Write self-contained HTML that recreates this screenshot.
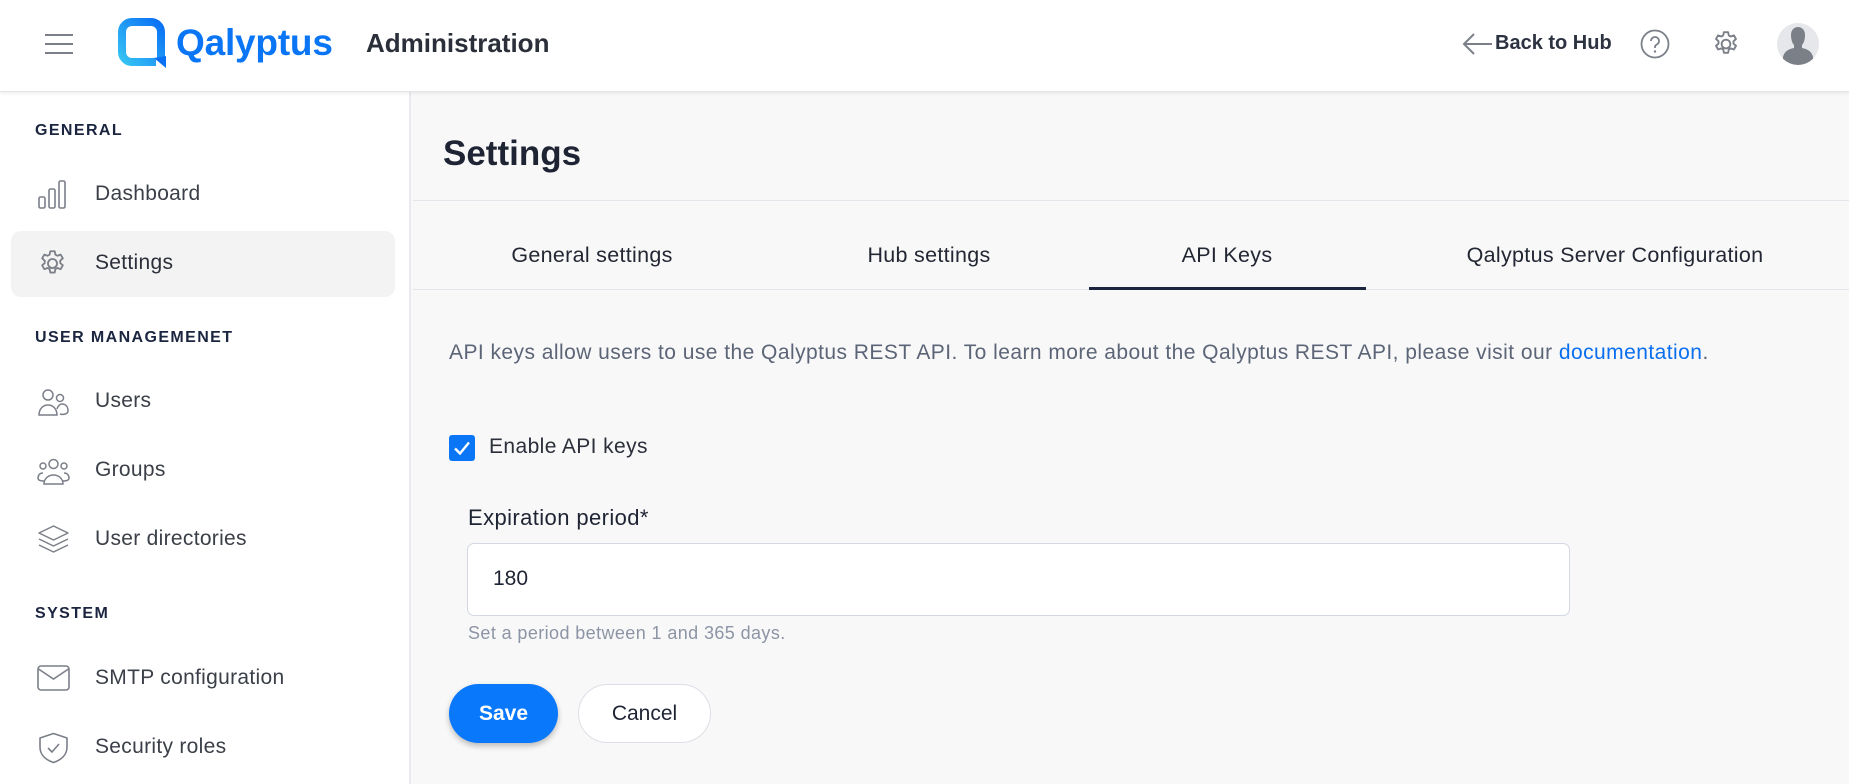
<!DOCTYPE html>
<html><head><meta charset="utf-8"><style>
*{margin:0;padding:0;box-sizing:border-box}
body{width:1849px;height:784px;overflow:hidden;background:#f8f8f8;font-family:"Liberation Sans",sans-serif;position:relative}
.a{position:absolute;white-space:nowrap}
#hdr{position:absolute;left:0;top:0;width:1849px;height:92px;background:#fff;border-bottom:1px solid #e3e5ea;box-shadow:0 2px 3px rgba(0,0,0,.06);z-index:2}
#side{position:absolute;left:0;top:92px;width:411px;height:692px;background:#fff;border-right:2px solid #e8eaef}
.sec{font-size:16px;font-weight:bold;letter-spacing:1.4px;color:#1b2540}
.it{font-size:21px;color:#3b3f48;letter-spacing:0.3px}
.ic{position:absolute}
.tab{font-size:21.5px;color:#222733;letter-spacing:0.3px;text-align:center}
</style></head><body>
<div id="hdr">
  <div class="a" style="left:45px;top:34px;width:28px">
    <div style="height:2px;background:#7a7f88;margin-bottom:7px"></div>
    <div style="height:2px;background:#7a7f88;margin-bottom:7px"></div>
    <div style="height:2px;background:#7a7f88"></div>
  </div>
  <svg class="a" style="left:118px;top:18px" width="50" height="52" viewBox="0 0 50 52">
    <defs><linearGradient id="g" x1="0" y1="1" x2="1" y2="0"><stop offset="0" stop-color="#35c3f3"/><stop offset="1" stop-color="#0a70f5"/></linearGradient></defs>
    <path d="M38 44 H14 A10 10 0 0 1 4 34 V14 A10 10 0 0 1 14 4 H33 A10 10 0 0 1 43 14 V40" fill="none" stroke="url(#g)" stroke-width="8" stroke-linejoin="round"/>
    <path d="M36 40 L48 50 L48 38 Z" fill="#0a70f5"/>
  </svg>
  <div class="a" style="left:176px;top:22px;font-size:37px;font-weight:bold;color:#0a76f6;letter-spacing:-0.2px">Qalyptus</div>
  <div class="a" style="left:366px;top:28px;font-size:26px;font-weight:bold;color:#2b2f3a">Administration</div>
  <svg class="a" style="left:1462px;top:32px" width="32" height="24" viewBox="0 0 32 24"><path d="M30 12H2M12 2L2 12l10 10" fill="none" stroke="#7b7f88" stroke-width="2"/></svg>
  <div class="a" style="left:1495px;top:32px;font-size:20px;font-weight:bold;color:#2d3240">Back to Hub</div>
  <svg class="a" style="left:1640px;top:29px" width="30" height="30" viewBox="0 0 30 30"><circle cx="15" cy="15" r="13.5" fill="none" stroke="#7b7f88" stroke-width="1.8"/><path d="M11 12a4 4 0 1 1 5.5 3.7c-1 .5-1.5 1.2-1.5 2.3v1" fill="none" stroke="#7b7f88" stroke-width="1.8"/><circle cx="15" cy="22.5" r="1.2" fill="#7b7f88"/></svg>
  <svg class="a" style="left:1711px;top:29px" width="30" height="30" viewBox="0 0 24 24"><path d="M12 8.5a3.5 3.5 0 1 0 0 7 3.5 3.5 0 0 0 0-7z" fill="none" stroke="#7b7f88" stroke-width="1.5"/><path d="M10.3 2.5h3.4l.5 2.6 1.6.9 2.5-.9 1.7 2.9-2 1.8v1.9l2 1.7-1.7 3-2.5-.9-1.6.9-.5 2.6h-3.4l-.5-2.6-1.6-.9-2.5.9-1.7-3 2-1.7v-1.9l-2-1.8 1.7-2.9 2.5.9 1.6-.9z" fill="none" stroke="#7b7f88" stroke-width="1.5" stroke-linejoin="round"/></svg>
  <div class="a" style="left:1777px;top:23px;width:42px;height:42px;border-radius:50%;background:#e6e7ea;overflow:hidden">
    <svg width="42" height="42" viewBox="0 0 42 42"><path d="M14 12c0-6 4-8 7-8s7 2 7 8c0 4-1 8-3 10v3c6 1 10 4 11 9v10H6V34c1-5 5-8 11-9v-3c-2-2-3-6-3-10z" fill="#7b8088"/></svg>
  </div>
</div>
<div id="side">
  <div class="a sec" style="left:35px;top:30px">GENERAL</div>
  <svg class="ic" style="left:38px;top:88px" width="30" height="30" viewBox="0 0 30 30"><g fill="none" stroke="#7b7f88" stroke-width="1.6"><rect x="1" y="17" width="6" height="11" rx="1.5"/><rect x="11" y="9" width="6" height="19" rx="1.5"/><rect x="21" y="1" width="6" height="27" rx="1.5"/></g></svg>
  <div class="a it" style="left:95px;top:90px">Dashboard</div>
  <div class="a" style="left:11px;top:139px;width:384px;height:66px;background:#f3f3f3;border-radius:10px"></div>
  <svg class="ic" style="left:37px;top:156px" width="31" height="31" viewBox="0 0 24 24"><path d="M12 8.5a3.5 3.5 0 1 0 0 7 3.5 3.5 0 0 0 0-7z" fill="none" stroke="#7b7f88" stroke-width="1.4"/><path d="M10.3 2.5h3.4l.5 2.6 1.6.9 2.5-.9 1.7 2.9-2 1.8v1.9l2 1.7-1.7 3-2.5-.9-1.6.9-.5 2.6h-3.4l-.5-2.6-1.6-.9-2.5.9-1.7-3 2-1.7v-1.9l-2-1.8 1.7-2.9 2.5.9 1.6-.9z" fill="none" stroke="#7b7f88" stroke-width="1.4" stroke-linejoin="round"/></svg>
  <div class="a it" style="left:95px;top:159px;color:#2b2f3a">Settings</div>
  <div class="a sec" style="left:35px;top:237px">USER MANAGEMENET</div>
  <svg class="ic" style="left:37px;top:296px" width="33" height="30" viewBox="0 0 33 30"><g fill="none" stroke="#7b7f88" stroke-width="1.5"><circle cx="11" cy="7" r="5"/><circle cx="23" cy="10" r="3.5"/><path d="M2 27c0-6 4-10 9-10s9 4 9 10z"/><path d="M20 21c1-3 2.5-5 5-5 4 0 6 3 6 7 0 3-5 4-8 3"/></g></svg>
  <div class="a it" style="left:95px;top:297px">Users</div>
  <svg class="ic" style="left:37px;top:365px" width="33" height="30" viewBox="0 0 33 30"><g fill="none" stroke="#7b7f88" stroke-width="1.5"><circle cx="16.5" cy="7" r="4.5"/><circle cx="6" cy="9" r="3"/><circle cx="27" cy="9" r="3"/><path d="M7 27c0-5 4-9 9.5-9s9.5 4 9.5 9z"/><path d="M7 24c-4 0-6-1-6-3 0-3 2-5 5-5M26 24c4 0 6-1 6-3 0-3-2-5-5-5"/></g></svg>
  <div class="a it" style="left:95px;top:366px">Groups</div>
  <svg class="ic" style="left:37px;top:432px" width="33" height="32" viewBox="0 0 33 32"><g fill="none" stroke="#7b7f88" stroke-width="1.5" stroke-linejoin="round"><path d="M16.5 2L31 9l-14.5 7L2 9z"/><path d="M2 15l14.5 7L31 15"/><path d="M2 21l14.5 7L31 21"/></g></svg>
  <div class="a it" style="left:95px;top:435px">User directories</div>
  <div class="a sec" style="left:35px;top:513px">SYSTEM</div>
  <svg class="ic" style="left:37px;top:573px" width="33" height="26" viewBox="0 0 33 26"><g fill="none" stroke="#7b7f88" stroke-width="1.6"><rect x="1" y="1" width="31" height="24" rx="3"/><path d="M1.5 4l15 10 15-10"/></g></svg>
  <div class="a it" style="left:95px;top:574px">SMTP configuration</div>
  <svg class="ic" style="left:38px;top:640px" width="31" height="32" viewBox="0 0 31 32"><g fill="none" stroke="#7b7f88" stroke-width="1.6" stroke-linejoin="round"><path d="M15.5 1.5L29 6v9c0 8-6 13-13.5 15.5C8 28 2 23 2 15V6z"/><path d="M10 16l4 4 7-8"/></g></svg>
  <div class="a it" style="left:95px;top:643px">Security roles</div>
</div>
<div class="a" style="left:443px;top:134px;font-size:35px;font-weight:bold;color:#1e2433">Settings</div>
<div class="a" style="left:413px;top:200px;width:1436px;height:1px;background:#e3e5ea"></div>
<div class="a" style="left:413px;top:289px;width:1436px;height:1px;background:#e3e5ea"></div>
<div class="a tab" style="left:442px;top:243px;width:300px">General settings</div>
<div class="a tab" style="left:779px;top:243px;width:300px">Hub settings</div>
<div class="a tab" style="left:1077px;top:243px;width:300px">API Keys</div>
<div class="a tab" style="left:1365px;top:243px;width:500px">Qalyptus Server Configuration</div>
<div class="a" style="left:1089px;top:287px;width:277px;height:3px;background:#1b2540"></div>
<div class="a" style="left:449px;top:341px;font-size:21px;letter-spacing:0.45px;color:#5c6577">API keys allow users to use the Qalyptus REST API. To learn more about the Qalyptus REST API, please visit our <span style="color:#0a6fef">documentation</span>.</div>
<div class="a" style="left:449px;top:435px;width:26px;height:26px;background:#0a76f6;border-radius:3px"><svg width="26" height="26" viewBox="0 0 26 26"><path d="M6 13.5l5 5 9-11" fill="none" stroke="#fff" stroke-width="2.4"/></svg></div>
<div class="a" style="left:489px;top:435px;font-size:21px;letter-spacing:0.4px;color:#2b2f3a">Enable API keys</div>
<div class="a" style="left:468px;top:505px;font-size:22px;letter-spacing:0.4px;color:#1e2433">Expiration period*</div>
<div class="a" style="left:467px;top:543px;width:1103px;height:73px;background:#fff;border:1.5px solid #d3d8e2;border-radius:7px"></div>
<div class="a" style="left:493px;top:567px;font-size:21px;color:#1e2433">180</div>
<div class="a" style="left:468px;top:623px;font-size:18px;letter-spacing:0.4px;color:#8c94a5">Set a period between 1 and 365 days.</div>
<div class="a" style="left:449px;top:684px;width:109px;height:59px;border-radius:30px;background:#0a78fb;box-shadow:0 3px 6px rgba(0,0,0,.25);color:#fff;font-size:21px;font-weight:bold;text-align:center;line-height:59px">Save</div>
<div class="a" style="left:578px;top:684px;width:133px;height:59px;border-radius:30px;background:#fff;border:1px solid #dcdfe5;color:#1e2433;font-size:21px;text-align:center;line-height:57px">Cancel</div>
</body></html>
